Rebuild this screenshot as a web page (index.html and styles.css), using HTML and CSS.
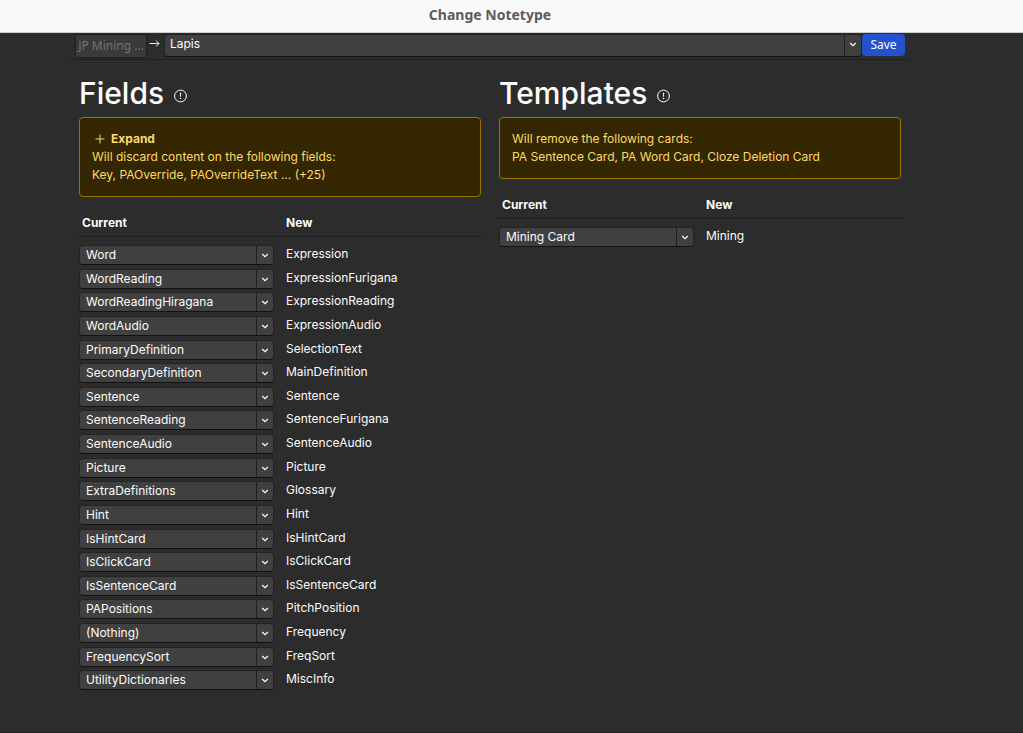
FILE: index.html
```
<!DOCTYPE html>
<html lang="en">
<head>
<meta charset="utf-8">
<title>Change Notetype</title>
<link rel="stylesheet" href="styles.css">
</head>
<body>
<svg class="defs" aria-hidden="true">
  <symbol id="chevron" viewBox="0 0 17 18"><path d="M5.5 8 L8.5 10.8 L11.5 8" fill="none" stroke="currentColor" stroke-width="1.3"/></symbol>
  <symbol id="info" viewBox="0 0 14 14"><circle cx="6.5" cy="7" r="5.9" fill="none" stroke="currentColor" stroke-width="1"/><path d="M5.8 3.8 H7.2 L6.8 8 H6.2 Z" fill="currentColor"/><circle cx="6.5" cy="9.6" r=".75" fill="currentColor"/></symbol>
</svg>
<header class="titlebar">Change Notetype</header>
<main class="page">
  <div class="toolbar">
    <button class="current-type" type="button" disabled>JP Mining ...</button>
    <svg class="arrow" viewBox="0 0 12 12" aria-hidden="true"><path d="M.5 5.5 H10 M7 2.5 L10 5.5 L7 8.5" fill="none" stroke="currentColor" stroke-width=".9"/></svg>
    <div class="select select-large">
      <select aria-label="New notetype"><option>Lapis</option></select>
      <svg class="chevron" aria-hidden="true"><use href="#chevron"/></svg>
    </div>
    <button class="save" type="button">Save</button>
  </div>
  <div class="columns">
    <section class="column">
      <h1 class="heading">Fields <svg class="info" role="img" aria-label="Help"><use href="#info"/></svg></h1>
      <div class="alert">
        <button class="expand" type="button"><svg class="plus" viewBox="0 0 12 12" aria-hidden="true"><path d="M6 1.5 V10.5 M1.5 6 H10.5" stroke="currentColor"/></svg>Expand</button>
        <p>Will discard content on the following fields:</p>
        <p>Key, PAOverride, PAOverrideText ... (+25)</p>
      </div>
      <table class="map map-fill">
        <thead><tr><th scope="col">Current</th><th scope="col">New</th></tr></thead>
        <tbody id="fields"></tbody>
      </table>
    </section>
    <section class="column">
      <h1 class="heading">Templates <svg class="info" role="img" aria-label="Help"><use href="#info"/></svg></h1>
      <div class="alert">
        <p>Will remove the following cards:</p>
        <p>PA Sentence Card, PA Word Card, Cloze Deletion Card</p>
      </div>
      <table class="map">
        <thead><tr><th scope="col">Current</th><th scope="col">New</th></tr></thead>
        <tbody id="templates"></tbody>
      </table>
    </section>
  </div>
</main>
<script src="app.js"></script>
</body>
</html>
```
FILE: styles.css
```
* { box-sizing: border-box; }
body {
  margin: 0;
  min-height: 100vh;
  display: flex;
  flex-direction: column;
  background: #2c2c2c;
  border-bottom: 1px solid #2a2127;
  color: #fcfcfc;
  font: 12px/18px Inter, "Noto Sans", sans-serif;
}
p { margin: 0; }
button, select { font: inherit; color: inherit; }
.defs { display: none; }
.titlebar {
  height: 33px;
  padding-right: 43px;
  background: #fafafa;
  border-bottom: 1px solid #cfcfcf;
  color: #5c5c5c;
  font: bold 14px/30px "Noto Sans", sans-serif;
  text-align: center;
}
.page {
  flex: 1;
  display: flex;
  flex-direction: column;
  padding: 0 113px 38px 70px;
}
.toolbar {
  display: flex;
  align-items: flex-start;
  padding: 1px 5px;
  border-bottom: 1px solid #202020;
}
.current-type {
  width: 72px;
  height: 24px;
  padding: 0;
  background: #3a3a3a;
  border: 1px solid #202020;
  color: #737373;
  font: 12px/20px "Noto Sans", sans-serif;
  white-space: nowrap;
  overflow: hidden;
}
.arrow { width: 12px; height: 12px; margin: 4px 3px 0 2px; }
.select { display: grid; grid-template-columns: 1fr 18px; }
.select select {
  grid-area: 1 / 1 / 2 / 3;
  appearance: none;
  width: 100%;
  height: 20px;
  padding: 0 20px 0 6px;
  background: #404040;
  border: 1px solid #242424;
  border-bottom-color: #121212;
  border-radius: 4px;
  line-height: 18px;
}
.chevron {
  grid-area: 1 / 2 / 2 / 3;
  width: 17px;
  height: 18px;
  margin-top: 1px;
  border-left: 1px solid #202020;
  pointer-events: none;
  z-index: 1;
}
.select-large { flex: 1; }
.select-large select { height: 23px; padding: 0 20px 4px 5px; }
.select-large .chevron { height: 21px; padding-bottom: 3px; }
.save {
  width: 43px;
  height: 22px;
  padding: 0;
  background: #2451cf;
  border: 0;
  border-radius: 4px;
  font: 12px/22px "Noto Sans", sans-serif;
}
.columns {
  flex: 1;
  display: grid;
  grid-template-columns: 1fr 1fr;
  gap: 18px;
  padding: 15px 9px 0;
}
.column { display: flex; flex-direction: column; min-width: 0; }
.heading {
  display: flex;
  align-items: center;
  gap: 10px;
  margin: 0 0 6px;
  font-size: 30px;
  font-weight: 500;
  line-height: 36px;
}
.info { width: 14px; height: 14px; margin-top: 6px; }
.alert {
  padding: 12px;
  background: #332600;
  border: 1px solid #997404;
  border-radius: 4px;
  color: #ffda6a;
}
.expand {
  display: flex;
  align-items: center;
  gap: 5px;
  padding: 0 2px;
  background: none;
  border: 0;
  font-weight: 700;
}
.plus { width: 12px; height: 12px; }
.map {
  display: flex;
  flex-direction: column;
  margin: 17px -3px 0;
}
.map-fill { flex: 1; }
.map tr {
  display: grid;
  grid-template-columns: 195px 1fr;
  column-gap: 12px;
  padding: 0 3px;
}
.map thead tr { border-bottom: 1px solid #202020; padding-bottom: 4px; }
.map th { padding: 0 3px; text-align: left; font-weight: 700; }
.map th + th { padding: 0; }
.map td { padding: 0; }
.map tbody { padding-top: 8px; }
.map-fill tbody { flex: 1; display: grid; grid-auto-rows: 1fr; }
```
FILE: app.js
```
const fields = [
  ["Word", "Expression"], ["WordReading", "ExpressionFurigana"],
  ["WordReadingHiragana", "ExpressionReading"], ["WordAudio", "ExpressionAudio"],
  ["PrimaryDefinition", "SelectionText"], ["SecondaryDefinition", "MainDefinition"],
  ["Sentence", "Sentence"], ["SentenceReading", "SentenceFurigana"],
  ["SentenceAudio", "SentenceAudio"], ["Picture", "Picture"],
  ["ExtraDefinitions", "Glossary"], ["Hint", "Hint"], ["IsHintCard", "IsHintCard"],
  ["IsClickCard", "IsClickCard"], ["IsSentenceCard", "IsSentenceCard"],
  ["PAPositions", "PitchPosition"], ["(Nothing)", "Frequency"],
  ["FrequencySort", "FreqSort"], ["UtilityDictionaries", "MiscInfo"]
];
const templates = [["Mining Card", "Mining"]];

function fill(id, rows) {
  document.getElementById(id).innerHTML = rows.map(([current, target], i) => `
    <tr>
      <td><div class="select">
        <select aria-labelledby="${id}-${i}"><option>${current}</option></select>
        <svg class="chevron" aria-hidden="true"><use href="#chevron"/></svg>
      </div></td>
      <td id="${id}-${i}">${target}</td>
    </tr>`).join("");
}

fill("fields", fields);
fill("templates", templates);
```
